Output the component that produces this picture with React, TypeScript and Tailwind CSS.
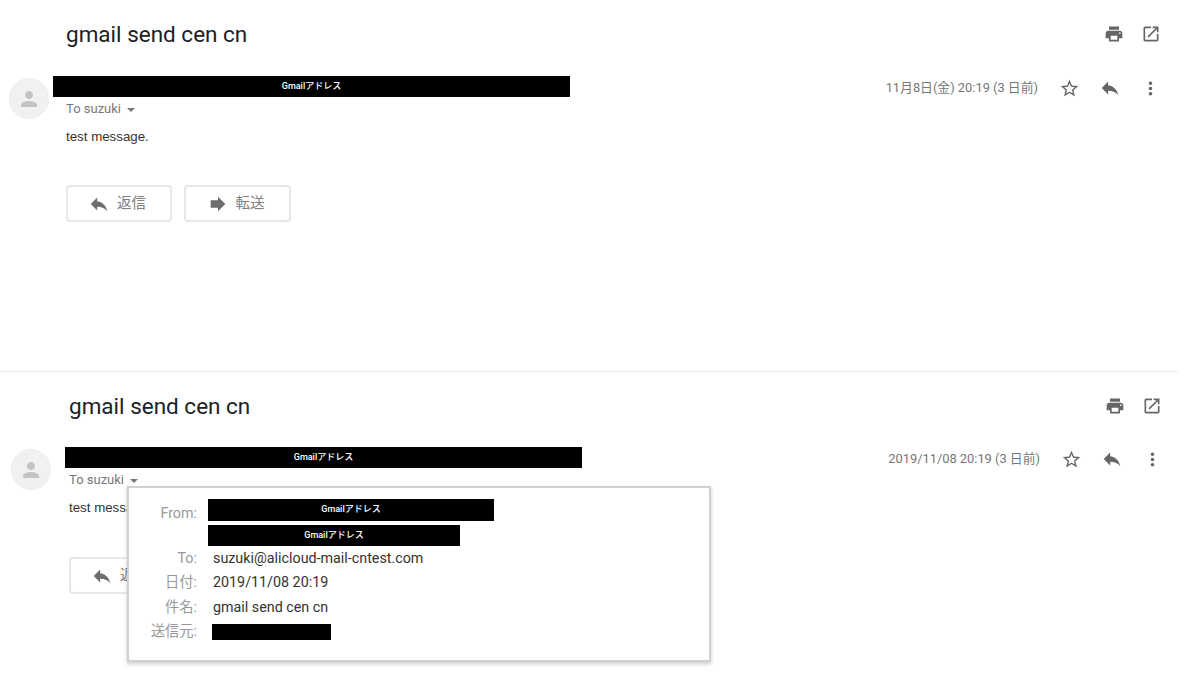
import React from "react";

const P = {
  print: "M19 8H5c-1.66 0-3 1.34-3 3v6h4v4h12v-4h4v-6c0-1.66-1.34-3-3-3zm-3 11H8v-5h8v5zm3-7c-.55 0-1-.45-1-1s.45-1 1-1 1 .45 1 1-.45 1-1 1zm-1-9H6v4h12V3z",
  open: "M19 19H5V5h7V3H5c-1.11 0-2 .9-2 2v14c0 1.1.89 2 2 2h14c1.1 0 2-.9 2-2v-7h-2v7zM14 3v2h3.59l-9.83 9.83 1.41 1.41L19 6.41V10h2V3h-7z",
  star: "M22 9.24l-7.19-.62L12 2 9.19 8.63 2 9.24l5.46 4.73L5.82 21 12 17.27 18.18 21l-1.63-7.03L22 9.24zM12 15.4l-3.76 2.27 1-4.28-3.32-2.88 4.38-.38L12 6.1l1.71 4.04 4.38.38-3.32 2.88 1 4.28L12 15.4z",
  reply: "M10 9V5l-7 7 7 7v-4.1c5 0 8.5 1.6 11 5.1-1-5-4-10-11-11z",
  more: "M12 8c1.1 0 2-.9 2-2s-.9-2-2-2-2 .9-2 2 .9 2 2 2zm0 2c-1.1 0-2 .9-2 2s.9 2 2 2 2-.9 2-2-.9-2-2-2zm0 6c-1.1 0-2 .9-2 2s.9 2 2 2 2-.9 2-2-.9-2-2-2z",
  forward: "M12 8V4l8 8-8 8v-4H4V8z",
  person: "M12 12c2.21 0 4-1.79 4-4s-1.79-4-4-4-4 1.79-4 4 1.79 4 4 4zm0 2c-2.67 0-8 1.34-8 4v2h16v-2c0-2.66-5.33-4-8-4z",
};

const ROBOTO = "font-['Roboto','Noto_Sans_CJK_JP',sans-serif]";

function Icon({ d, className }: { d: string; className: string }) {
  return (
    <svg viewBox="0 0 24 24" className={className} fill="currentColor" aria-hidden="true">
      <path d={d} />
    </svg>
  );
}

function Redact({ className, label }: { className: string; label?: string }) {
  return (
    <div className={`flex items-center justify-center bg-black text-[9px] font-medium text-white ${ROBOTO} ${className}`}>
      {label}
    </div>
  );
}

function ActionButton({ icon, label, className }: { icon: string; label: string; className: string }) {
  return (
    <div className={`flex h-[37px] items-center justify-center gap-[7px] rounded-[4px] border-2 border-[#e6e7ea] pr-[4px] text-[14.5px] text-[#808080] ${ROBOTO} ${className}`}>
      <Icon d={icon} className="h-[22px] w-[22px] text-[#6e6e6e]" />
      <span>{label}</span>
    </div>
  );
}

function Mail({
  textShift, rowMargin, contentPad, date, gapAvatar,
}: {
  textShift: string; rowMargin: string; contentPad: string; date: string; gapAvatar: string;
}) {
  return (
    <>
      <div className={`flex h-[44px] items-center justify-between ${contentPad}`}>
        <h1 className={`mt-[1px] text-[22.5px] leading-none text-[#202124] ${ROBOTO}`}>gmail send cen cn</h1>
        <div className="flex items-center gap-[17px] text-[#666]">
          <Icon d={P.print} className="h-[20px] w-[20px]" />
          <Icon d={P.open} className="h-[20px] w-[20px]" />
        </div>
      </div>
      <div className={`flex items-start ${rowMargin} ${gapAvatar}`}>
        <div className="mt-[2px] flex h-[41px] w-[40px] shrink-0 items-center justify-center rounded-full border border-[#eeeeee] bg-[#f1f1f1] text-[#c4c4c4]">
          <Icon d={P.person} className="h-[24px] w-[24px]" />
        </div>
        <div className="flex w-[530px] flex-col">
          <Redact className="h-[21px] w-[517px]" label="Gmailアドレス" />
          <div className={`mt-[2px] flex h-[20px] items-center gap-[6px] text-[13px] text-[#777] ${ROBOTO} ${textShift}`}>
            <span>To suzuki</span>
            <span className="mt-[1px] h-0 w-0 border-x-[4.5px] border-t-[4.5px] border-x-transparent border-t-[#777]" />
          </div>
          <p className={`mt-[8px] font-['Liberation_Sans',sans-serif] text-[13.3px] leading-[20px] text-[#333] ${textShift}`}>test message.</p>
        </div>
        <div className="ml-auto flex h-[24px] items-center text-[#666]">
          <span className={`mr-[21px] text-[12.85px] text-[#777] ${ROBOTO}`}>{date}</span>
          <Icon d={P.star} className="mr-[19px] h-[21px] w-[21px]" />
          <Icon d={P.reply} className="mr-[19px] h-[22px] w-[22px]" />
          <Icon d={P.more} className="h-[21px] w-[21px]" />
        </div>
      </div>
    </>
  );
}

function Label({ children, className = "" }: { children?: React.ReactNode; className?: string }) {
  return <span className={`w-[68px] shrink-0 text-right text-[#999] ${className}`}>{children}</span>;
}

function Row({ label, value, className }: { label: string; value: string; className: string }) {
  return (
    <div className={`flex items-center ${className}`}>
      <Label>{label}</Label>
      <span className="ml-[16px]">{value}</span>
    </div>
  );
}

export default function App() {
  return (
    <div className="relative h-[675px] w-[1200px] overflow-hidden bg-white">
      <section className="h-[372px] w-[1178px] border-b border-[#ececec]">
        <div className="w-[1200px] pt-[12px]">
          <Mail
            textShift="ml-[13px]"
            contentPad="pl-[66px] pr-[39px]"
            rowMargin="mt-[20px] pl-[9px] pr-[39px]"
            gapAvatar="gap-[4px]"
            date="11月8日(金) 20:19 (3 日前)"
          />
          <div className="mt-[38px] flex gap-[12px] pl-[66px]">
            <ActionButton icon={P.reply} label="返信" className="w-[106px]" />
            <ActionButton icon={P.forward} label="転送" className="w-[107px]" />
          </div>
        </div>
      </section>
      <section className="relative pt-[12px]">
        <Mail
          textShift="ml-[4px]"
          contentPad="pl-[69px] pr-[38px]"
          rowMargin="mt-[19px] pl-[11px] pr-[37px]"
          gapAvatar="gap-[14px]"
          date="2019/11/08 20:19 (3 日前)"
        />
        <div className="mt-[39px] flex gap-[12px] pl-[69px]">
          <ActionButton icon={P.reply} label="返信" className="w-[106px]" />
        </div>

        <div className={`absolute left-[127px] top-[114px] h-[176px] w-[584px] border-2 border-[#d0d0d0] bg-white pt-[11px] text-[14.3px] text-[#333] shadow-[0_2px_4px_rgba(0,0,0,0.2)] ${ROBOTO}`}>
          <div className="flex h-[22px] items-center">
            <Label className="mt-[7px]">From:</Label>
            <Redact className="ml-[11px] h-[22px] w-[286px]" label="Gmailアドレス" />
          </div>
          <div className="mt-[4px] flex h-[21px] items-center">
            <Label />
            <Redact className="ml-[11px] h-[21px] w-[252px]" label="Gmailアドレス" />
          </div>
          <Row label="To:" value="suzuki@alicloud-mail-cntest.com" className="mt-[1px] h-[23.5px]" />
          <Row label="日付:" value="2019/11/08 20:19" className="h-[24.5px]" />
          <Row label="件名:" value="gmail send cen cn" className="h-[26px]" />
          <div className="flex h-[22px] items-center">
            <Label>送信元:</Label>
            <div className="ml-[15px] h-[16px] w-[119px] bg-black" />
          </div>
        </div>
      </section>
    </div>
  );
}
